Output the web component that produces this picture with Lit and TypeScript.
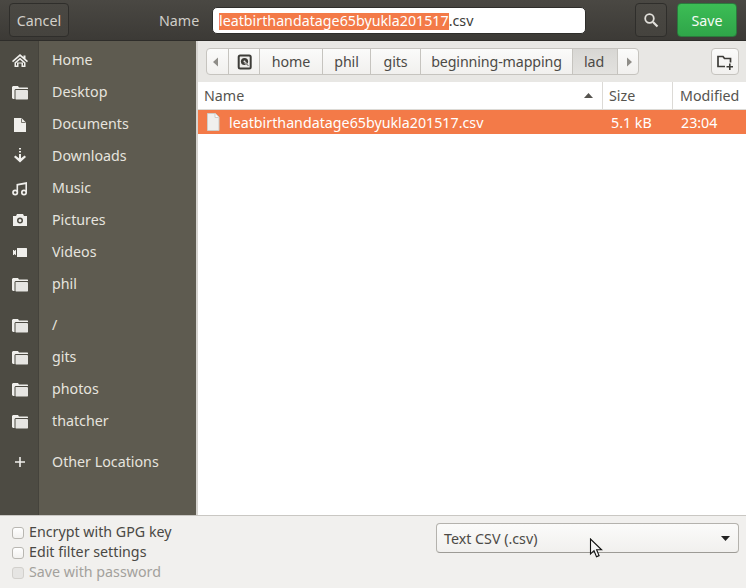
import { LitElement, html, css, svg } from "lit";
import { customElement } from "lit/decorators.js";

const folder = svg`<path d="M0 3 1 2h5l1 1.500h8.500l.5.500v1H3.500L2.500 6v9H1l-1-1z" fill="#f0efec"/><path d="M4 6h11.500l.5.500V15l-.5.500H4l-.5-.5V6.500z" fill="#e6e5e2"/>`;

const icons: Record<string, unknown> = {
  home: svg`<path d="M8 2 0 9l1 1.200L8 4.200l7 6L16 9l-2.500-2.200V3.500h-2v1.600z" fill="#f0efec"/><path fill-rule="evenodd" d="M2.500 10.500 8 5.800l5.500 4.700V15H9.500v-3.500h-3V15h-4zM4 11.200V13.500h1V10.500h6v3h1v-2.300L8 7.800z" fill="#f0efec"/>`,
  folder,
  doc: svg`<path d="M2 2h7.500L14 6.500V16H2z" fill="#f0efec"/><path d="M9.500 2.500V6.500H13.500" fill="none" stroke="#5a584f" stroke-width=".8"/>`,
  down: svg`<path d="M7 0h2v1.500H7zM7 3h2v1.500H7zM7 6h2v4.200L12.600 7.500 14 9l-6 5.500L2 9l1.400-1.500L7 10.200z" fill="#f0efec"/>`,
  music: svg`<path d="M4.500 4 15 2v10h-1.600V4.200L6.100 5.500V12H4.500z" fill="#f0efec"/><circle cx="3.200" cy="12.500" r="2.200" fill="none" stroke="#f0efec" stroke-width="1.700"/><circle cx="12" cy="12.500" r="2.200" fill="none" stroke="#f0efec" stroke-width="1.700"/>`,
  camera: svg`<path fill-rule="evenodd" d="M5 2h6l1 2h3v10H1V4h3zM8 5.500a3 3 0 1 0 0 6 3 3 0 0 0 0-6zm0 1.500a1.500 1.500 0 1 1 0 3 1.500 1.500 0 0 1 0-3z" fill="#f0efec"/>`,
  video: svg`<path d="M5 4h9.500l.5.500V13H5zM1 6h1v1l2-1.200v5.400L2 10v1H1z" fill="#f0efec"/>`,
  plus: svg`<path d="M7.200 3h1.600v4.200H13v1.600H8.800V13H7.200V8.800H3V7.200h4.200z" fill="#f0efec"/>`,
};

const places = [
  [["home", "Home"], ["folder", "Desktop"], ["doc", "Documents"], ["down", "Downloads"], ["music", "Music"], ["camera", "Pictures"], ["video", "Videos"], ["folder", "phil"]],
  [["folder", "/"], ["folder", "gits"], ["folder", "photos"], ["folder", "thatcher"]],
  [["plus", "Other Locations"]],
];

@customElement("app-root")
export class AppRoot extends LitElement {
  static styles = css`
    :host {
      display: block;
      width: 746px;
      height: 588px;
      position: relative;
      overflow: hidden;
      font-family: "Noto Sans", sans-serif;
      font-size: 14.25px;
      color: #3d3c38;
      background: #f1f0ee;
    }
    .page {
      display: flex;
      flex-direction: column;
      height: 588px;
    }
    header {
      height: 41px;
      flex: none;
      box-sizing: border-box;
      display: flex;
      align-items: center;
      padding: 0 9px;
      background: linear-gradient(#4a4843, #3c3a36);
      border-bottom: 1px solid #2e2d2a;
    }
    .btn {
      height: 34px;
      box-sizing: border-box;
      display: flex;
      align-items: center;
      justify-content: center;
      border: 1px solid #2f2e2b;
      border-radius: 4px;
      background: linear-gradient(#4a4843, #45433e);
      color: #d3d0ca;
    }
    .cancel {
      width: 60px;
    }
    .title {
      width: 41px;
      margin-left: 90px;
      color: #d0cec8;
      white-space: nowrap;
    }
    .entry {
      width: 374px;
      height: 27px;
      box-sizing: border-box;
      margin-left: 12px;
      margin-top: 1px;
      padding-left: 6px;
      display: flex;
      align-items: center;
      background: #fff;
      border: 1px solid #2f2e2b;
      border-radius: 5px;
      color: #3d3c38;
    }
    .entry span {
      display: inline-block;
      line-height: 17px;
      padding-bottom: 1px;
      margin-top: 1px;
      background: linear-gradient(transparent 1px, #f37a48 1px);
      color: #fff;
    }
    .search {
      width: 32px;
      margin-left: 49px;
    }
    .save {
      width: 60px;
      margin-left: 10px;
      border-color: #2b7a3d;
      background: linear-gradient(#3cbd55, #2fa549);
      color: #f4fbf5;
    }
    .body {
      flex: 1;
      min-height: 0;
      display: flex;
      border-bottom: 1px solid #c9c7c3;
    }
    .side {
      width: 198px;
      flex: none;
      box-sizing: border-box;
      padding-top: 2px;
      border-right: 2px solid #d6d4d0;
      background: linear-gradient(to right, #4d4b43 0, #4d4b43 38px, #45433c 38px, #45433c 39px, #5e5b50 39px);
    }
    .group {
      margin-bottom: 9px;
    }
    .row {
      height: 32px;
      display: flex;
      align-items: center;
      color: #e6e4df;
    }
    .row svg {
      width: 16px;
      height: 16px;
      margin-left: 12px;
      margin-top: 2px;
      flex: none;
    }
    .row span {
      margin-left: 24px;
    }
    .main {
      flex: 1;
      min-width: 0;
      display: flex;
      flex-direction: column;
      background: #fff;
    }
    .pathbar {
      height: 41px;
      flex: none;
      box-sizing: border-box;
      display: flex;
      align-items: center;
      padding: 0 7px 0 8px;
      background: #e8e7e4;
    }
    .crumbs {
      height: 27px;
      display: flex;
      box-sizing: border-box;
      border: 1px solid #c6c4bf;
      border-radius: 4px;
      background: linear-gradient(#fbfbfa, #f1f0ee);
      color: #4c4a46;
      letter-spacing: -0.12px;
    }
    .crumbs div {
      display: flex;
      align-items: center;
      justify-content: center;
      box-sizing: border-box;
      border-right: 1px solid #c6c4bf;
    }
    .crumbs div:last-child {
      border-right: 0;
    }
    .crumbs .back {
      width: 22px;
      justify-content: flex-start;
      padding-left: 5px;
    }
    .crumbs .forward {
      width: 20px;
      padding-left: 1px;
    }
    .crumbs .on {
      width: 45px;
      padding-right: 2px;
      background: linear-gradient(#d8d7d4, #e3e2df);
    }
    .newdir {
      margin-left: auto;
      width: 28px;
      height: 27px;
      box-sizing: border-box;
      display: flex;
      align-items: center;
      justify-content: center;
      border: 1px solid #c6c4bf;
      border-radius: 4px;
      background: linear-gradient(#fbfbfa, #f1f0ee);
    }
    .cols {
      height: 28px;
      flex: none;
      box-sizing: border-box;
      display: flex;
      border-bottom: 1px solid #dcdad6;
      color: #56544f;
    }
    .cols div {
      display: flex;
      align-items: center;
      box-sizing: border-box;
      padding-left: 6px;
      border-right: 1px solid #dcdad6;
    }
    .cols div:last-child {
      border-right: 0;
    }
    .filerow {
      height: 24px;
      flex: none;
      display: flex;
      align-items: center;
      background: #f37a48;
      color: #fff;
    }
    .filerow > * {
      flex: none;
    }
    footer {
      height: 72px;
      flex: none;
      display: flex;
      justify-content: space-between;
      padding: 5px 7px 0 12px;
      box-sizing: border-box;
    }
    .checks {
      display: flex;
      flex-direction: column;
    }
    .check {
      height: 20px;
      display: flex;
      align-items: center;
      gap: 5px;
      color: #4a4844;
    }
    .check i {
      width: 10px;
      height: 10px;
      margin-top: 4px;
      box-sizing: content-box;
      border: 1px solid #b9b7b2;
      border-radius: 3px;
      background: linear-gradient(#fff, #f2f1ef);
    }
    .check.off {
      color: #a3a19c;
    }
    .check.off i {
      background: #e6e5e3;
      border-color: #d2d0cc;
    }
    .combo {
      width: 303px;
      height: 30px;
      margin-top: 2px;
      box-sizing: border-box;
      display: flex;
      align-items: center;
      justify-content: space-between;
      padding: 0 8px 0 7px;
      border: 1px solid #b4b2ad;
      border-bottom-color: #9d9b96;
      border-radius: 4px;
      background: linear-gradient(#fbfbfa, #f1f0ee);
      color: #4c4a46;
    }
    .cursor {
      position: absolute;
      left: 589px;
      top: 538px;
    }
  `;

  render() {
    return html`
      <div class="page">
        <header>
          <div class="btn cancel">Cancel</div>
          <div class="title">Name</div>
          <div class="entry"><span>leatbirthandatage65byukla201517</span>.csv</div>
          <div class="btn search">
            <svg width="16" height="16" viewBox="0 0 16 16"><circle cx="6.500" cy="6.500" r="4.300" fill="none" stroke="#e2e0db" stroke-width="1.800"/><path d="m10 10 4.500 4.500" stroke="#e2e0db" stroke-width="2.200"/></svg>
          </div>
          <div class="btn save">Save</div>
        </header>
        <div class="body">
          <nav class="side">
            ${places.map(
              (g) => html`<div class="group">
                ${g.map(
                  ([icon, label]) => html`<div class="row">
                    <svg viewBox="0 0 16 16">${icons[icon]}</svg><span>${label}</span>
                  </div>`
                )}
              </div>`
            )}
          </nav>
          <div class="main">
            <div class="pathbar">
              <div class="crumbs">
                <div class="back">
                  <svg width="8" height="10" viewBox="0 0 8 10"><path d="M6 .5v9L1 5z" fill="#8f8d88"/></svg>
                </div>
                <div style="width:31px">
                  <svg width="15" height="16" viewBox="0 0 15 16"><rect x="1.700" y="1.500" width="12" height="13" rx="1.500" fill="#eeedeb" stroke="#3d3c38" stroke-width="2"/><circle cx="7.500" cy="7.500" r="3.600" fill="#3d3c38"/><circle cx="7.500" cy="7.500" r="1" fill="#eeedeb"/><path d="m8 8.500 3.500 3.500" stroke="#eeedeb" stroke-width="1.800"/><path d="m8.300 8.800 3 3" stroke="#3d3c38" stroke-width="1"/></svg>
                </div>
                <div style="width:63px">home</div>
                <div style="width:48px">phil</div>
                <div style="width:50px">gits</div>
                <div style="width:152px">beginning-mapping</div>
                <div class="on">lad</div>
                <div class="forward">
                  <svg width="8" height="10" viewBox="0 0 8 10"><path d="M2 .5v9l5-4.500z" fill="#8f8d88"/></svg>
                </div>
              </div>
              <div class="newdir">
                <svg width="18" height="16" viewBox="0 0 18 16"><path d="M9 12.500H2V2.500h5l1.500 2h6v4" fill="none" stroke="#3d3c38" stroke-width="1.700"/><path d="M13 9.500h1.600V12H17v1.500h-2.400V16H13v-2.500h-2.500V12H13z" fill="#3d3c38"/></svg>
              </div>
            </div>
            <div class="cols">
              <div style="width:405px;justify-content:space-between;padding-right:9px">
                Name<svg width="9" height="5" viewBox="0 0 9 5"><path d="M4.500 0l4.500 5H0z" fill="#56544f"/></svg>
              </div>
              <div style="width:70px">Size</div>
              <div style="flex:1;padding-left:7px">Modified</div>
            </div>
            <div class="filerow">
              <svg style="margin-left:7px" width="16" height="18" viewBox="0 0 16 18"><path d="M2.500 .5h8l3.500 3.500v13.500H2.500z" fill="#f0efed" stroke="#cfcdc8"/><path d="M10 1v3.500h3.500" fill="#fbfaf9" stroke="#cfcdc8"/></svg>
              <span style="margin-left:8px;width:382px">leatbirthandatage65byukla201517.csv</span>
              <span style="width:70px">5.1 kB</span>
              <span>23:04</span>
            </div>
          </div>
        </div>
        <footer>
          <div class="checks">
            <label class="check"><i></i>Encrypt with GPG key</label>
            <label class="check"><i></i>Edit filter settings</label>
            <label class="check off"><i></i>Save with password</label>
          </div>
          <div class="combo">
            Text CSV (.csv)
            <svg width="9" height="5" viewBox="0 0 9 5"><path d="M0 0h9L4.500 5z" fill="#222"/></svg>
          </div>
        </footer>
      </div>
      <svg class="cursor" width="14" height="21" viewBox="0 0 14 21">
        <path d="M1.500 1v15l3.500-3.300 2.500 6 2.600-1.100-2.500-5.800h5z" fill="#f5f5f5" stroke="#111" stroke-width="1.100"/>
      </svg>
    `;
  }
}
